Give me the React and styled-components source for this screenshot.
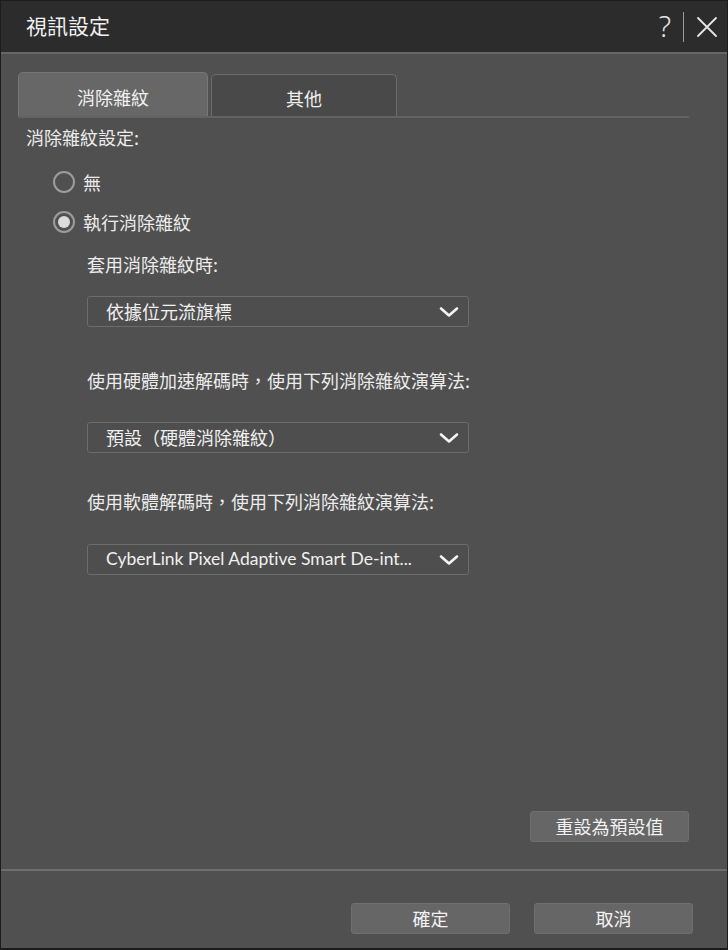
import React from "react";
import styled, { createGlobalStyle } from "styled-components";

const Global = createGlobalStyle`
  html, body { margin: 0; padding: 0; background: #1e1e1e; }
  body { font-family: "Noto Sans CJK TC", "Noto Sans", sans-serif; }
  * { box-sizing: border-box; }
`;

const Window = styled.div`
  width: 728px;
  height: 950px;
  display: flex;
  flex-direction: column;
  background: #505050;
  border: 1px solid #1c1c1c;
  border-bottom-width: 2px;
  color: #ececec;
  font-size: 18px;
`;

const TitleBar = styled.div`
  height: 53px;
  flex: none;
  display: flex;
  align-items: center;
  background: #2c2c2c;
  border-bottom: 2px solid #676767;
  padding: 0 9px 0 25px;
`;

const Title = styled.div`
  flex: 1;
  font-size: 21px;
  color: #f0f0f0;
  line-height: 1;
  margin-top: -3px;
`;

const TitleIcons = styled.div`
  display: flex;
  align-items: center;
  gap: 12px;
  color: #e4e4e4;
`;

const HelpMark = styled.span`
  font-size: 29px;
  font-family: "Noto Sans", sans-serif;
  font-weight: 300;
  line-height: 1;
  margin-top: -3px;
`;

const Divider = styled.span`
  width: 1px;
  height: 30px;
  background: #9a9a9a;
`;

const Body = styled.div`
  flex: 1;
  display: flex;
  flex-direction: column;
  padding: 18px 38px 27px 17px;
`;

const TabStrip = styled.div`
  display: flex;
  align-items: flex-end;
  gap: 3px;
  height: 46px;
  border-bottom: 2px solid #626262;
`;

const Tab = styled.div`
  width: ${(p) => (p.$active ? "190px" : "186px")};
  height: ${(p) => (p.$active ? "44px" : "42px")};
  display: flex;
  align-items: center;
  justify-content: center;
  border: 1px solid ${(p) => (p.$active ? "#777" : "#6c6c6c")};
  border-bottom: none;
  border-radius: 5px 5px 0 0;
  background: ${(p) => (p.$active ? "#676767" : "#494949")};
  color: #f0f0f0;
  padding-top: 4px;
`;

const Content = styled.div`
  display: flex;
  flex-direction: column;
  padding-left: 8px;
`;

const Label = styled.div`
  line-height: 24px;
  margin-top: ${(p) => p.$mt || 0}px;
  margin-left: ${(p) => p.$ml || 0}px;
  color: #ececec;
`;

const RadioRow = styled.div`
  display: flex;
  align-items: center;
  gap: 8px;
  height: 40px;
  margin-left: 27px;
  margin-top: ${(p) => p.$mt || 0}px;
`;

const RadioCircle = styled.span`
  width: 22px;
  height: 22px;
  border-radius: 50%;
  border: 2px solid #9c9c9c;
  display: flex;
  align-items: center;
  justify-content: center;
  &::after {
    content: "";
    display: ${(p) => (p.$checked ? "block" : "none")};
    width: 12px;
    height: 12px;
    border-radius: 50%;
    background: #dcdcdc;
  }
`;

const Select = styled.div`
  width: 382px;
  height: 31px;
  margin-left: 61px;
  margin-top: ${(p) => p.$mt || 0}px;
  display: flex;
  align-items: center;
  justify-content: space-between;
  padding: 0 8px 0 18px;
  border: 1px solid #6c6c6c;
  border-radius: 3px;
  background: #4e4e4e;
  color: #f0f0f0;
`;

const SelectText = styled.span`
  line-height: 1;
  margin-top: -1px;
  white-space: nowrap;
  font-variant-ligatures: none;
  font-feature-settings: "liga" 0, "dlig" 0;
  font-family: ${(p) => (p.$latin ? '"Lato", "Noto Sans", sans-serif' : "inherit")};
  font-size: ${(p) => (p.$latin ? "17.5px" : "inherit")};
`;

const Chevron = () => (
  <svg width="22" height="14" viewBox="0 0 22 14">
    <path d="M3 3.5 L11 10.5 L19 3.5" fill="none" stroke="#f4f4f4" strokeWidth="2.6" strokeLinecap="round" strokeLinejoin="round" />
  </svg>
);

const ResetRow = styled.div`
  margin-top: auto;
  display: flex;
  justify-content: flex-end;
`;

const Button = styled.button`
  width: 159px;
  height: 31px;
  border: 1px solid #6f6f6f;
  border-radius: 3px;
  background: #666666;
  color: #f2f2f2;
  font-family: inherit;
  font-size: 18px;
  line-height: 1;
  padding: 0 0 2px;
  display: flex;
  align-items: center;
  justify-content: center;
`;

const Footer = styled.div`
  flex: none;
  height: 79px;
  border-top: 2px solid #6e6e6e;
  display: flex;
  justify-content: flex-end;
  align-items: flex-start;
  gap: 24px;
  padding: 32px 34px 0 0;
`;

export default function App() {
  return (
    <>
      <Global />
      <Window>
        <TitleBar>
          <Title>視訊設定</Title>
          <TitleIcons>
            <HelpMark>?</HelpMark>
            <Divider />
            <svg width="22" height="22" viewBox="0 0 22 22">
              <path d="M2 2 L20 20 M20 2 L2 20" stroke="#e6e6e6" strokeWidth="1.8" strokeLinecap="round" />
            </svg>
          </TitleIcons>
        </TitleBar>
        <Body>
          <TabStrip>
            <Tab $active>消除雜紋</Tab>
            <Tab>其他</Tab>
          </TabStrip>
          <Content>
            <Label $mt={7}>消除雜紋設定:</Label>
            <RadioRow $mt={13}>
              <RadioCircle />
              <span>無</span>
            </RadioRow>
            <RadioRow>
              <RadioCircle $checked />
              <span>執行消除雜紋</span>
            </RadioRow>
            <Label $mt={10} $ml={61}>套用消除雜紋時:</Label>
            <Select $mt={20}>
              <SelectText>依據位元流旗標</SelectText>
              <Chevron />
            </Select>
            <Label $mt={41} $ml={61}>使用硬體加速解碼時，使用下列消除雜紋演算法:</Label>
            <Select $mt={30}>
              <SelectText>預設（硬體消除雜紋）</SelectText>
              <Chevron />
            </Select>
            <Label $mt={36} $ml={61}>使用軟體解碼時，使用下列消除雜紋演算法:</Label>
            <Select $mt={31}>
              <SelectText $latin>CyberLink Pixel Adaptive Smart De-int...</SelectText>
              <Chevron />
            </Select>
          </Content>
          <ResetRow>
            <Button>重設為預設值</Button>
          </ResetRow>
        </Body>
        <Footer>
          <Button>確定</Button>
          <Button>取消</Button>
        </Footer>
      </Window>
    </>
  );
}
